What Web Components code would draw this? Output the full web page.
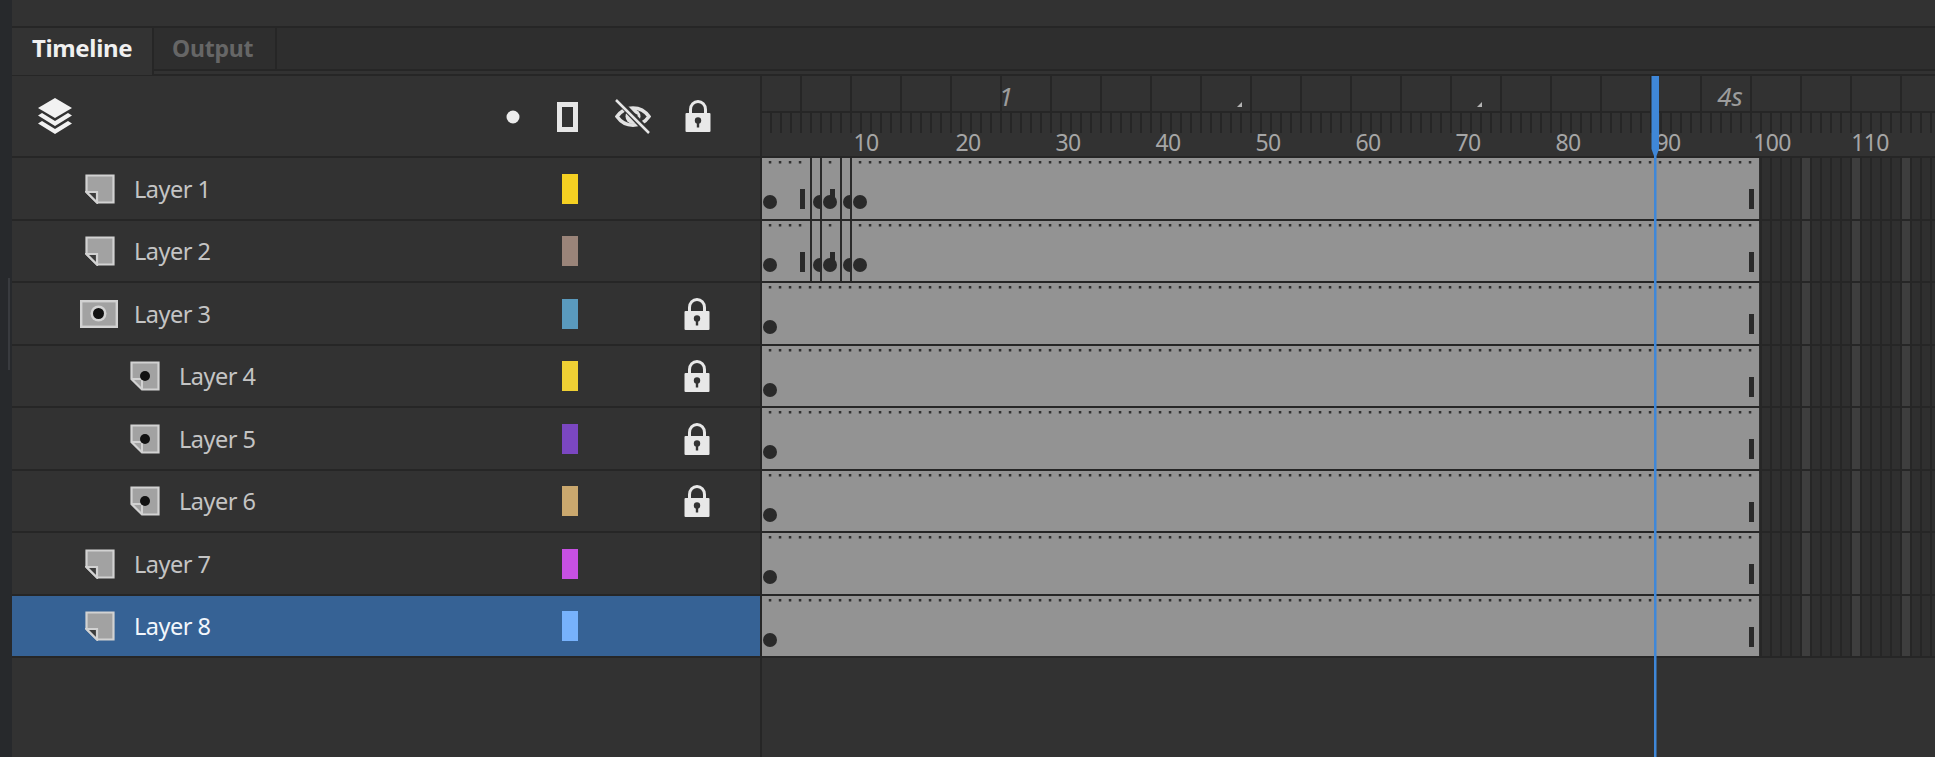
<!DOCTYPE html>
<html>
<head>
<meta charset="utf-8">
<title>Timeline</title>
<style>
  html, body { margin: 0; height: 100%; overflow: hidden; background: #323232; }
</style>
</head>
<body>
<tl-app>
  <tl-tabs slot="tabs">
    <tl-tab active>Timeline</tl-tab>
    <tl-tab>Output</tl-tab>
  </tl-tabs>
  <tl-layer kind="page" color="#f5d022" keys="busy">Layer 1</tl-layer>
  <tl-layer kind="page" color="#9a8479" keys="busy">Layer 2</tl-layer>
  <tl-layer kind="mask" color="#5a9abd" locked>Layer 3</tl-layer>
  <tl-layer kind="masked" color="#efd034" locked>Layer 4</tl-layer>
  <tl-layer kind="masked" color="#7b47c1" locked>Layer 5</tl-layer>
  <tl-layer kind="masked" color="#caa86e" locked>Layer 6</tl-layer>
  <tl-layer kind="page" color="#c650e2">Layer 7</tl-layer>
  <tl-layer kind="page" color="#77b2fc" selected>Layer 8</tl-layer>
</tl-app>

<script>
// Icons shared by the header and the layer rows
const ICONS = {
  layers: `<svg width="34" height="36" viewBox="0 0 34 36"><path fill="#f2f2f2" d="M17 0L34 10 17 20 0 10Z"/><path fill="#f2f2f2" d="M4 15L17 23 30 15 34 17.5 17 28 0 17.5Z"/><path fill="#f2f2f2" d="M4 23L17 31 30 23 34 25.5 17 36 0 25.5Z"/></svg>`,
  dot: `<svg width="14" height="14" viewBox="0 0 14 14"><circle cx="7" cy="7" r="6.5" fill="#ececec"/></svg>`,
  outline: `<svg width="21" height="30" viewBox="0 0 21 30"><rect x="2.5" y="2.5" width="16" height="25" fill="none" stroke="#e6e6e6" stroke-width="5"/></svg>`,
  eye: `<svg width="36" height="36" viewBox="0 0 36 36"><path fill="none" stroke="#e2e2e2" stroke-width="3.5" d="M2 17.500C10 6 26 6 34 17.500 26 29 10 29 2 17.500Z"/><circle cx="18" cy="17.500" r="7.500" fill="#e2e2e2"/><path fill="#323232" d="M18 13.500L23 16 20 19Z"/><path stroke="#323232" stroke-width="6.500" d="M3 1L34 34"/><path stroke="#e6e6e6" stroke-width="2.500" d="M1 1L34 34"/></svg>`,
  lock: `<svg width="26" height="32" viewBox="0 0 26 32"><path fill="none" stroke="#e8e8e8" stroke-width="3" d="M5.500 14V9.500a7.500 8 0 0 1 15 0V14"/><rect x="0.500" y="13" width="25" height="19" rx="1" fill="#e8e8e8"/><circle cx="13" cy="20.500" r="3.200" fill="#333"/><rect x="11.800" y="21" width="2.400" height="6.500" fill="#333"/></svg>`,
  page: `<svg width="30" height="30" viewBox="0 0 30 30"><path fill="#a2a2a2" stroke="#d2d2d2" stroke-width="2.200" d="M1.500 1.500H28.500V28.500H12L1.500 18Z"/><path fill="#3c3c3c" stroke="#d2d2d2" stroke-width="2.200" d="M1.500 18H12V28.500Z"/></svg>`,
  masked: `<svg width="30" height="30" viewBox="0 0 30 30"><path fill="#a2a2a2" stroke="#d2d2d2" stroke-width="2.200" d="M1.500 1.500H28.500V28.500H12L1.500 18Z"/><path fill="none" stroke="#d2d2d2" stroke-width="2" d="M1.500 18H12V28.500"/><circle cx="15" cy="15" r="5" fill="#111"/></svg>`,
  mask: `<svg width="38" height="28" viewBox="0 0 38 28"><rect x="1.200" y="1.200" width="35.600" height="25.600" fill="#a2a2a2" stroke="#d2d2d2" stroke-width="2.400"/><circle cx="18.500" cy="13.500" r="8" fill="#d2d2d2"/><circle cx="18.500" cy="13.500" r="5.500" fill="#111"/></svg>`
};

class TlIcon extends HTMLElement {
  constructor() {
    super();
    this.attachShadow({ mode: 'open' });
    this.shadowRoot.innerHTML = `<style>:host{display:block;line-height:0}</style>` + ICONS[this.getAttribute('name')];
  }
}
customElements.define('tl-icon', TlIcon);

class TlTab extends HTMLElement {
  constructor() {
    super();
    this.attachShadow({ mode: 'open' });
    this.shadowRoot.innerHTML = `
      <style>
        :host {
          display: flex; align-items: center; box-sizing: border-box;
          width: 123px; height: 41px; padding: 0 0 2px 18px;
          font: 700 23px "Noto Sans", sans-serif; letter-spacing: -.2px;
          color: #666; border-right: 2px solid #262626;
        }
        :host([active]) {
          width: 142px; height: 47px; padding: 0 0 8px 20px;
          font-size: 24px; letter-spacing: -.35px;
          color: #f0f0f0; background: #333; border-right: 2px solid #262626;
        }
      </style>
      <slot></slot>`;
  }
}
customElements.define('tl-tab', TlTab);

class TlTabs extends HTMLElement {
  constructor() {
    super();
    this.attachShadow({ mode: 'open' });
    this.shadowRoot.innerHTML = `
      <style>
        :host {
          display: flex; align-items: flex-start; box-sizing: border-box;
          height: 48px; background: linear-gradient(#2e2e2e 41px, #262626 41px, #262626 43px, #323232 43px, #323232 46px, #262626 46px);
        }
      </style>
      <slot></slot>`;
  }
}
customElements.define('tl-tabs', TlTabs);

class TlRuler extends HTMLElement {
  constructor() {
    super();
    this.attachShadow({ mode: 'open' });
    const nums = [];
    for (let n = 10; n <= 110; n += 10) nums.push(`<span class="n${n}">${n}</span>`);
    this.shadowRoot.innerHTML = `
      <style>
        :host { display: block; height: 80px; color: #a6a6a6; font-family: "Noto Sans", sans-serif; }
        .secs {
          box-sizing: border-box; height: 37px; border-bottom: 2px solid #262626;
          display: flex; align-items: center;
          background: repeating-linear-gradient(90deg, transparent 0 48px, #262626 48px 50px) -10px 0;
          font: italic 26px/30px "Noto Sans", sans-serif; color: #9c9c9c;
        }
        .secs b { font-weight: 400; width: 40px; text-align: center; flex: none; margin-top: 4px; }
        .secs i { flex: none; width: 5px; height: 5px; background: #b4b4b4; clip-path: polygon(100% 0, 100% 100%, 0 100%); align-self: flex-end; margin-bottom: 4px; }
        .ticks {
          height: 20px;
          background: repeating-linear-gradient(90deg, transparent 0 8px, #262626 8px 10px);
        }
        .nums { display: flex; padding-left: 54px; height: 23px; font-size: 23px; line-height: 19px; letter-spacing: -.7px; }
        .nums span { flex: none; width: 100px; text-align: center; }
        .nums .n20 { margin-left: 2px; }
        .nums .n100 { margin-left: 4px; }
        .nums .n110 { margin-left: -2px; }
      </style>
      <div class="secs">
        <b style="margin-left:224px">1</b>
        <i style="margin-left:211px"></i>
        <i style="margin-left:235px"></i>
        <b style="margin-left:223px;width:50px">4s</b>
      </div>
      <div class="ticks"></div>
      <div class="nums">${nums.join('')}</div>`;
  }
}
customElements.define('tl-ruler', TlRuler);

class TlHeader extends HTMLElement {
  constructor() {
    super();
    this.attachShadow({ mode: 'open' });
    this.shadowRoot.innerHTML = `
      <style>
        :host { display: flex; height: 82px; box-sizing: border-box; border-bottom: 2px solid #262626; }
        .left {
          flex: none; width: 750px; box-sizing: border-box; border-right: 2px solid #262626;
          display: flex; align-items: center; padding-left: 26px;
        }
        tl-ruler { flex: 1; min-width: 0; }
      </style>
      <div class="left">
        <tl-icon name="layers" style="margin-top:-1px"></tl-icon>
        <tl-icon name="dot" style="margin-left:434px;margin-top:1px"></tl-icon>
        <tl-icon name="outline" style="margin-left:37px;margin-top:1px"></tl-icon>
        <tl-icon name="eye" style="margin-left:37px;margin-top:1px"></tl-icon>
        <tl-icon name="lock" style="margin-left:34px;margin-top:-1px"></tl-icon>
      </div>
      <tl-ruler></tl-ruler>`;
  }
}
customElements.define('tl-header', TlHeader);

// One row of frames: grey span, keyframes, then the empty striped frames
class TlFrames extends HTMLElement {
  constructor() {
    super();
    this.attachShadow({ mode: 'open' });
    const busy = this.getAttribute('keys') === 'busy';
    const dark = '#2a2a2a';
    let s = `<rect width="997" height="61" fill="#939393"/>`;
    // empty frames past the span
    s += `<rect x="997" width="176" height="61" fill="#2f2f2f"/>`;
    for (let x = 998; x < 1174; x += 10) s += `<rect x="${x}" width="2" height="61" fill="#262626"/>`;
    for (let x = 1040; x < 1174; x += 50) s += `<rect x="${x}" width="8" height="61" fill="#3e3e3e"/>`;
    // frame dots
    for (let x = 8; x < 990; x += 10) {
      if (busy && x > 40 && x < 98 && x !== 68) continue;
      s += `<rect x="${x - 1.2}" y="3" width="2.500" height="2.500" fill="#303030"/>`;
    }
    s += `<circle cx="8" cy="44" r="7" fill="${dark}"/>`;
    s += `<rect x="987" y="31" width="5" height="20" fill="${dark}"/>`;
    if (busy) {
      s += `<rect x="38" y="31" width="5" height="20" fill="${dark}"/>`;
      s += `<path fill="${dark}" d="M58 37A7 7 0 0 0 58 51Z"/><path fill="${dark}" d="M88 37A7 7 0 0 0 88 51Z"/>`;
      s += `<circle cx="68" cy="44" r="7" fill="${dark}"/><rect x="68" y="31" width="5" height="10" fill="${dark}"/>`;
      s += `<circle cx="98" cy="44" r="7" fill="${dark}"/>`;
      for (const x of [48, 58, 78, 88]) s += `<rect x="${x}" width="2" height="61" fill="${dark}"/>`;
    }
    this.shadowRoot.innerHTML = `
      <style>:host { display: block; overflow: hidden; } svg { display: block; }</style>
      <svg width="1173" height="61" viewBox="0 0 1173 61">${s}</svg>`;
  }
}
customElements.define('tl-frames', TlFrames);

class TlLayer extends HTMLElement {
  constructor() {
    super();
    this.attachShadow({ mode: 'open' });
    const kind = this.getAttribute('kind');
    const indent = kind === 'masked';
    const lock = this.hasAttribute('locked') ? `<tl-icon name="lock"></tl-icon>` : '';
    this.shadowRoot.innerHTML = `
      <style>
        :host {
          display: flex; height: 62.500px; box-sizing: border-box; border-bottom: 2px solid #262626;
          font: 23.500px "Noto Sans", sans-serif; letter-spacing: -.5px; color: #c4c4c4;
        }
        .head {
          flex: none; width: 750px; box-sizing: border-box; border-right: 2px solid #262626; padding-top: 1px;
          display: grid; grid-template-columns: 1fr 16px 106px 26px 50px; align-items: center;
        }
        :host([selected]) { color: #f2f6fb; }
        :host([selected]) .head { background: #366295; }
        .name { display: flex; align-items: center; padding-left: ${indent ? 118 : 68}px; }
        .name tl-icon { margin-left: ${kind === 'mask' ? 0 : indent ? 0 : 5}px; margin-right: ${kind === 'mask' ? 16 : 19}px; }
        .swatch { height: 30px; background: ${this.getAttribute('color')}; grid-column: 2; }
        .lock { grid-column: 4; }
        tl-frames { flex: 1; min-width: 0; }
      </style>
      <div class="head">
        <div class="name"><tl-icon name="${kind}"></tl-icon><span><slot></slot></span></div>
        <div class="swatch"></div>
        <div class="lock">${lock}</div>
      </div>
      <tl-frames keys="${this.getAttribute('keys') || ''}"></tl-frames>`;
  }
}
customElements.define('tl-layer', TlLayer);

class TlPlayhead extends HTMLElement {
  constructor() {
    super();
    this.attachShadow({ mode: 'open' });
    this.shadowRoot.innerHTML = `
      <style>
        :host { position: absolute; left: 1651px; top: 76px; bottom: 0; width: 9px; }
        svg { display: block; }
      </style>
      <svg width="9" height="681" viewBox="0 0 9 681">
        <path fill="#3f87d8" d="M.500 0H8V73L5.500 80V681H3V80L.500 73Z"/>
      </svg>`;
  }
}
customElements.define('tl-playhead', TlPlayhead);

class TlApp extends HTMLElement {
  constructor() {
    super();
    this.attachShadow({ mode: 'open' });
    this.shadowRoot.innerHTML = `
      <style>
        :host {
          display: flex; position: relative; height: 757px; width: 1935px; overflow: hidden;
          background: #323232;
        }
        .strip {
          flex: none; width: 12px; background: #27292c;
        }
        .strip div { width: 2px; height: 92px; margin: 278px 0 0 8px; background: #393b3f; }
        .main { flex: 1; min-width: 0; display: flex; flex-direction: column; }
        .top { flex: none; height: 26px; border-bottom: 2px solid #262626; }
        .rest { flex: 1; width: 750px; box-sizing: border-box; border-right: 2px solid #262626; }
      </style>
      <div class="strip"><div></div></div>
      <div class="main">
        <div class="top"></div>
        <slot name="tabs"></slot>
        <tl-header></tl-header>
        <slot></slot>
        <div class="rest"></div>
      </div>
      <tl-playhead></tl-playhead>`;
  }
}
customElements.define('tl-app', TlApp);
</script>
</body>
</html>
